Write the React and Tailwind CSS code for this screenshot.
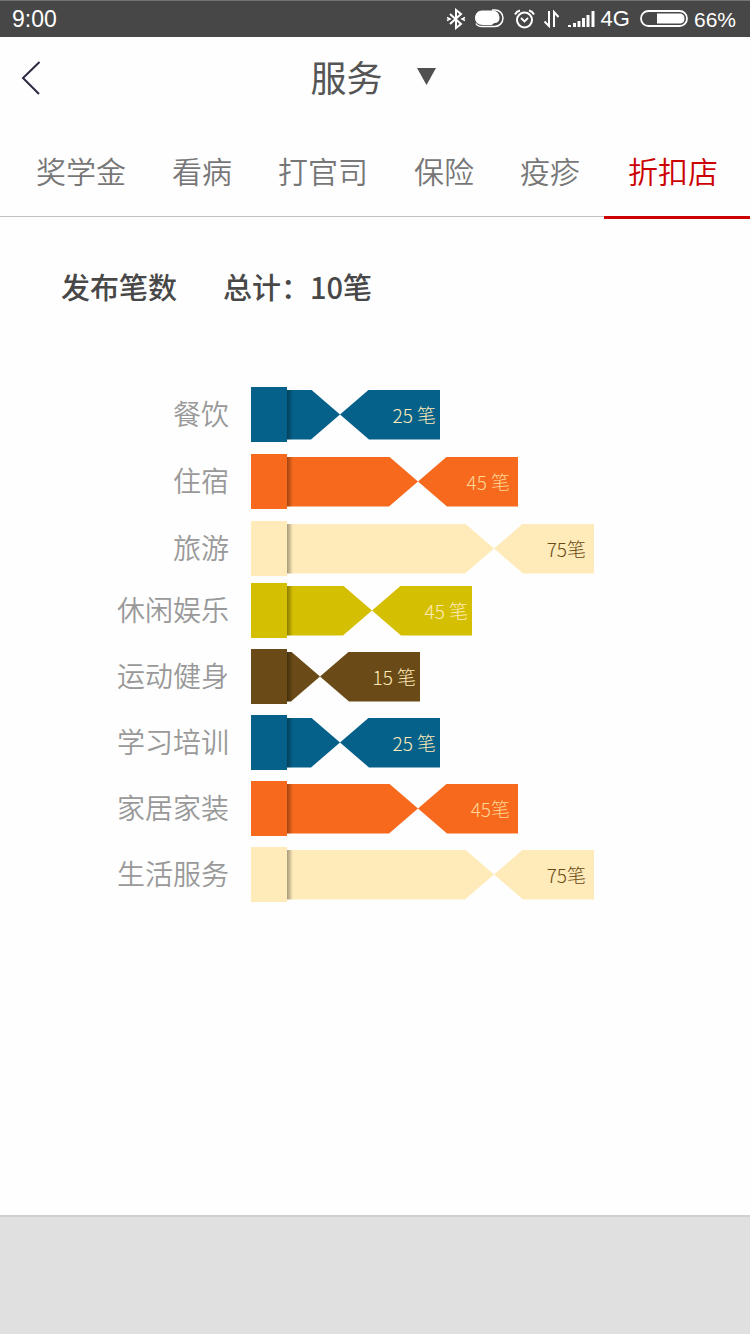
const leisure = [
  { label: '餐饮', value: '25 笔', body: 53, color: 'bg-[#056189]', text: 'text-[#ffebb9] pr-1' },
  { label: '住宿', value: '45 笔', body: 131, color: 'bg-[#f7691d]', text: 'text-[#ffd795] pr-2' },
  { label: '旅游', value: '75笔', body: 207, color: 'bg-[#ffebb9]', text: 'text-[#6a4a16] pr-2' },
];

const living = [
  { label: '休闲娱乐', value: '45 笔', body: 85, color: 'bg-[#d5bf02]', text: 'text-[#ffebb9] pr-1' },
  { label: '运动健身', value: '15 笔', body: 33, color: 'bg-[#6a4a16]', text: 'text-[#ffebb9] pr-1' },
  { label: '学习培训', value: '25 笔', body: 53, color: 'bg-[#056189]', text: 'text-[#ffebb9] pr-1' },
  { label: '家居家装', value: '45笔', body: 131, color: 'bg-[#f7691d]', text: 'text-[#ffd795] pr-2' },
  { label: '生活服务', value: '75笔', body: 207, color: 'bg-[#ffebb9]', text: 'text-[#6a4a16] pr-2' },
];

const tabs = ['奖学金', '看病', '打官司', '保险', '疫疹'];

function StatusBar() {
  return (
    <div className="flex h-[37px] items-center border-t border-[#727372] bg-[#474747] pr-3.5 pl-3 font-['Liberation_Sans',sans-serif] text-white">
      <span className="text-[23px] leading-none">9:00</span>
      <div className="ml-auto flex items-center">
        <svg width="20" height="22" viewBox="0 0 20 22" fill="none" stroke="#fff" strokeWidth="2" aria-hidden="true">
          <path d="M4 6l11 10-5 4V2l5 4L4 16" />
          <path d="M1 9.500l3 1.500-3 1.500M19 9.500L16 11l3 1.500" strokeWidth="1.500" />
        </svg>
        <svg className="ml-2" width="30" height="20" viewBox="0 0 30 20" fill="none" aria-hidden="true">
          <path d="M8 1.500h10c5 0 7.500 3 7.500 7.500 0 3-2 5-5 5l-3 2H9c-5 0-8-3-8-7s3-7.500 7-7.500z" fill="#fff" />
          <path d="M18 1h3c4 0 8 3 8 8s-4 8.500-8 8.500H8c-3 0-5-1-6-3" stroke="#fff" strokeWidth="1.500" />
        </svg>
        <svg className="ml-2.5" width="21" height="20" viewBox="0 0 21 20" fill="none" stroke="#fff" strokeWidth="2" aria-hidden="true">
          <circle cx="10.500" cy="11" r="7.500" />
          <path d="M7 9l3.500 3.500L14 9" strokeWidth="1.800" />
          <path d="M1 5.500C2 3.500 4 2 6 1.500M20 5.500C19 3.500 17 2 15 1.500" />
        </svg>
        <svg className="ml-2" width="17" height="18" viewBox="0 0 17 18" fill="none" stroke="#fff" strokeWidth="2" aria-hidden="true">
          <path d="M6 1v15L1.500 11.500M11 17V2l4.500 5" />
        </svg>
        <svg className="ml-2" width="27" height="18" viewBox="0 0 27 18" fill="#fff" aria-hidden="true">
          <path d="M0 15h3v2H0zM5 13h3v4H5zM9.500 11h3v6h-3zM14 8h3v9h-3zM18.500 5h3v12h-3zM23.500 1h3v16h-3z" />
        </svg>
        <span className="ml-1.5 text-[22px] leading-none">4G</span>
        <svg className="ml-2.5" width="48" height="18" viewBox="0 0 48 18" fill="none" aria-hidden="true">
          <rect x="1" y="1" width="46" height="15" rx="7.500" stroke="#fff" strokeWidth="1.800" />
          <path d="M17 3.500h22c4 0 5.500 2 5.500 5s-1.500 5-5.500 5H17z" fill="#fff" />
        </svg>
        <span className="ml-1.5 text-[21px] leading-none">66%</span>
      </div>
    </div>
  );
}

function Ribbon({ row }) {
  return (
    <li className="grid h-[55px] grid-cols-[229px_1fr] items-center gap-[22px]">
      <span className="pb-1 text-right text-[28px] leading-none font-[350] text-[#999]">{row.label}</span>
      <div className="flex items-center">
        <div className={`h-[55px] w-9 ${row.color}`} />
        <div
          className={`h-[50px] bg-linear-to-r from-black/35 to-transparent to-[6px] [clip-path:polygon(0_0,calc(100%-29px)_0,100%_50%,calc(100%-29px)_100%,0_100%)] ${row.color}`}
          style={{ width: row.body }}
        />
        <div
          className={`flex h-[50px] w-[100px] items-center justify-end text-[19px] leading-none font-light [clip-path:polygon(29px_0,100%_0,100%_100%,29px_100%,0_50%)] ${row.color} ${row.text}`}
        >
          {row.value}
        </div>
      </div>
    </li>
  );
}

export default function App() {
  return (
    <div className="flex min-h-screen flex-col bg-[#fefefe] font-['Noto_Sans_CJK_SC',sans-serif]">
      <StatusBar />
      <header className="grid h-[82px] grid-cols-[1fr_auto_1fr] items-center">
        <button type="button" aria-label="返回" className="ml-5 w-6">
          <svg width="24" height="36" viewBox="0 0 24 36" fill="none" stroke="#2b2940" strokeWidth="2" aria-hidden="true">
            <path d="M19.500 2L3 18l16 16" />
          </svg>
        </button>
        <button type="button" className="flex items-center gap-[34px] pr-1 pb-1 text-[36px] leading-none text-[#555]">
          服务
          <svg width="19" height="17" viewBox="0 0 19 17" fill="#505050" aria-hidden="true">
            <path d="M0 0h19L9.500 17z" />
          </svg>
        </button>
      </header>
      <nav className="flex h-[100px] text-[30px] leading-none font-[350]">
        <div className="flex flex-1 gap-[46px] border-b border-[#c0c1c0] pl-9 text-[#777] mb-0.5">
          {tabs.map((tab) => (
            <button key={tab} type="button" className="shrink-0 pt-1">
              {tab}
            </button>
          ))}
        </div>
        <button type="button" className="shrink-0 border-b-3 border-[#cc0000] pt-1 pr-8 pl-6 text-[#cc0000]">
          折扣店
        </button>
      </nav>
      <main className="flex-1">
        <h1 className="flex gap-[46px] pt-[53px] pl-[61px] text-[29px] leading-none font-medium text-[#484848]">
          <span>发布笔数</span>
          <span>总计：10笔</span>
        </h1>
        <div className="flex flex-col gap-[7px] pt-[86px]">
          <ul className="flex flex-col gap-3">
            {leisure.map((row) => (
              <Ribbon key={row.label} row={row} />
            ))}
          </ul>
          <ul className="flex flex-col gap-[11px]">
            {living.map((row) => (
              <Ribbon key={row.label} row={row} />
            ))}
          </ul>
        </div>
      </main>
      <footer className="h-[119px] border-t-2 border-[#d0d0d0] bg-[#e0e0e0]" />
    </div>
  );
}
